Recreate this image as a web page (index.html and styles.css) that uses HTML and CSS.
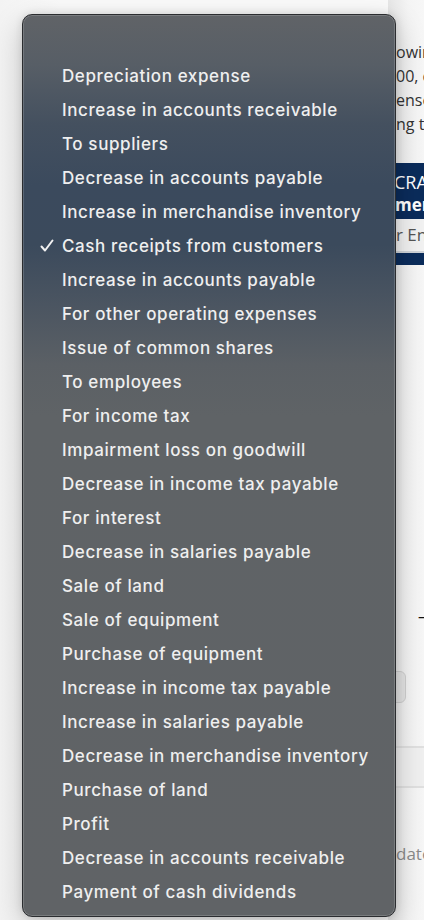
FILE: index.html
```html
<!DOCTYPE html>
<html>
<head>
<meta charset="utf-8">
<link rel="stylesheet" href="styles.css">
</head>
<body>
<div class="page">
  <div class="col">
    <p class="para">
      <span class="ln">owing</span>
      <span class="ln">00, c</span>
      <span class="ln">ense</span>
      <span class="ln">ng t</span>
    </p>
    <div class="navy">
      <div class="nt">CRA</div>
      <div class="nb">men</div>
      <div class="inp">r En</div>
    </div>
    <div class="dash">—</div>
    <div class="btn"></div>
    <div class="rows"><div class="row"></div></div>
    <div class="date">date</div>
  </div>
</div>

<div class="menu">
  <ul class="items">
    <li>Depreciation expense</li>
    <li>Increase in accounts receivable</li>
    <li>To suppliers</li>
    <li>Decrease in accounts payable</li>
    <li>Increase in merchandise inventory</li>
    <li class="checked"><svg class="check" width="14" height="14" viewBox="0 0 14 14"><path d="M1.5 7.5 L5 11.5 L12.5 1.5" fill="none" stroke="#f2f2f2" stroke-width="2" stroke-linecap="round" stroke-linejoin="round"/></svg>Cash receipts from customers</li>
    <li>Increase in accounts payable</li>
    <li>For other operating expenses</li>
    <li>Issue of common shares</li>
    <li>To employees</li>
    <li>For income tax</li>
    <li>Impairment loss on goodwill</li>
    <li>Decrease in income tax payable</li>
    <li>For interest</li>
    <li>Decrease in salaries payable</li>
    <li>Sale of land</li>
    <li>Sale of equipment</li>
    <li>Purchase of equipment</li>
    <li>Increase in income tax payable</li>
    <li>Increase in salaries payable</li>
    <li>Decrease in merchandise inventory</li>
    <li>Purchase of land</li>
    <li>Profit</li>
    <li>Decrease in accounts receivable</li>
    <li>Payment of cash dividends</li>
  </ul>
</div>
</body>
</html>
```
FILE: styles.css
```css
html, body {
  margin: 0;
  padding: 0;
}
body {
  width: 424px;
  height: 920px;
  overflow: hidden;
  background: #f4f4f4;
  font-family: "Open Sans", sans-serif;
  position: relative;
}
.page {
  height: 920px;
  display: flex;
  background: linear-gradient(90deg, #f3f3f3 0, #fafafa 60px, #fafafa 100%);
}
.col {
  margin-left: 388px;
  width: 36px;
  overflow: hidden;
  white-space: nowrap;
  display: flex;
  flex-direction: column;
  background: linear-gradient(90deg, #e6e6e6 0, #f4f4f4 20px, #f7f7f7 100%);
}
.para {
  margin: 40px 0 0 8px;
  font-size: 16px;
  line-height: 24px;
  color: #333;
  display: flex;
  flex-direction: column;
}
.navy {
  margin-top: 27px;
  background: #0b2c5b;
  height: 102px;
  display: flex;
  flex-direction: column;
  padding-top: 7px;
  box-sizing: border-box;
}
.nt {
  color: #fff;
  font-size: 18px;
  line-height: 24px;
  padding-left: 6px;
}
.nb {
  color: #fff;
  font-size: 17px;
  font-weight: 700;
  line-height: 22px;
  padding-left: 7px;
}
.inp {
  margin-top: 3px;
  height: 32px;
  background: #f2f2f2;
  color: #555;
  font-size: 17px;
  line-height: 32px;
  padding-left: 8px;
  border-bottom: 2px solid #cfd3d8;
}
.dash {
  margin-top: 339px;
  margin-left: 30px;
  font-size: 16px;
  line-height: 24px;
  color: #111;
}
.btn {
  margin-top: 43px;
  margin-left: -4px;
  width: 20px;
  height: 30px;
  border-radius: 6px;
  background: #e4e4e4;
  border: 1px solid #cfcfcf;
}
.rows {
  margin-top: 43px;
  border-top: 2px solid #e0e0e0;
  border-bottom: 2px solid #e0e0e0;
  background: #f0f0f0;
  height: 38px;
}
.date {
  margin-top: 54px;
  margin-left: 8px;
  font-size: 17px;
  line-height: 24px;
  color: #8a8a8a;
}
.menu {
  position: absolute;
  left: 22px;
  top: 14px;
  width: 374px;
  height: 903px;
  box-sizing: border-box;
  border-radius: 10px;
  border: 1px solid #2b2d30;
  box-shadow: inset 0 0 0 1px rgba(255,255,255,0.16), 0 10px 30px rgba(0,0,0,0.22), 0 0 8px rgba(0,0,0,0.12);
  background: linear-gradient(180deg, #606367 0, #575e66 50px, #44505f 110px, #3b4a5d 170px, #3b4a5c 230px, #4b5561 290px, #5b6065 350px, #5f6366 400px, #606366 100%);
  padding: 44px 0 0 0;
}
.items {
  list-style: none;
  margin: 0;
  padding: 0;
}
.items li {
  position: relative;
  height: 34px;
  line-height: 34px;
  padding-left: 39px;
  font-family: Inter, "Noto Sans", sans-serif;
  font-size: 17px;
  font-weight: 500;
  letter-spacing: 0.6px;
  color: #efefef;
  white-space: nowrap;
}
.check {
  position: absolute;
  left: 17px;
  top: 10px;
}
```
